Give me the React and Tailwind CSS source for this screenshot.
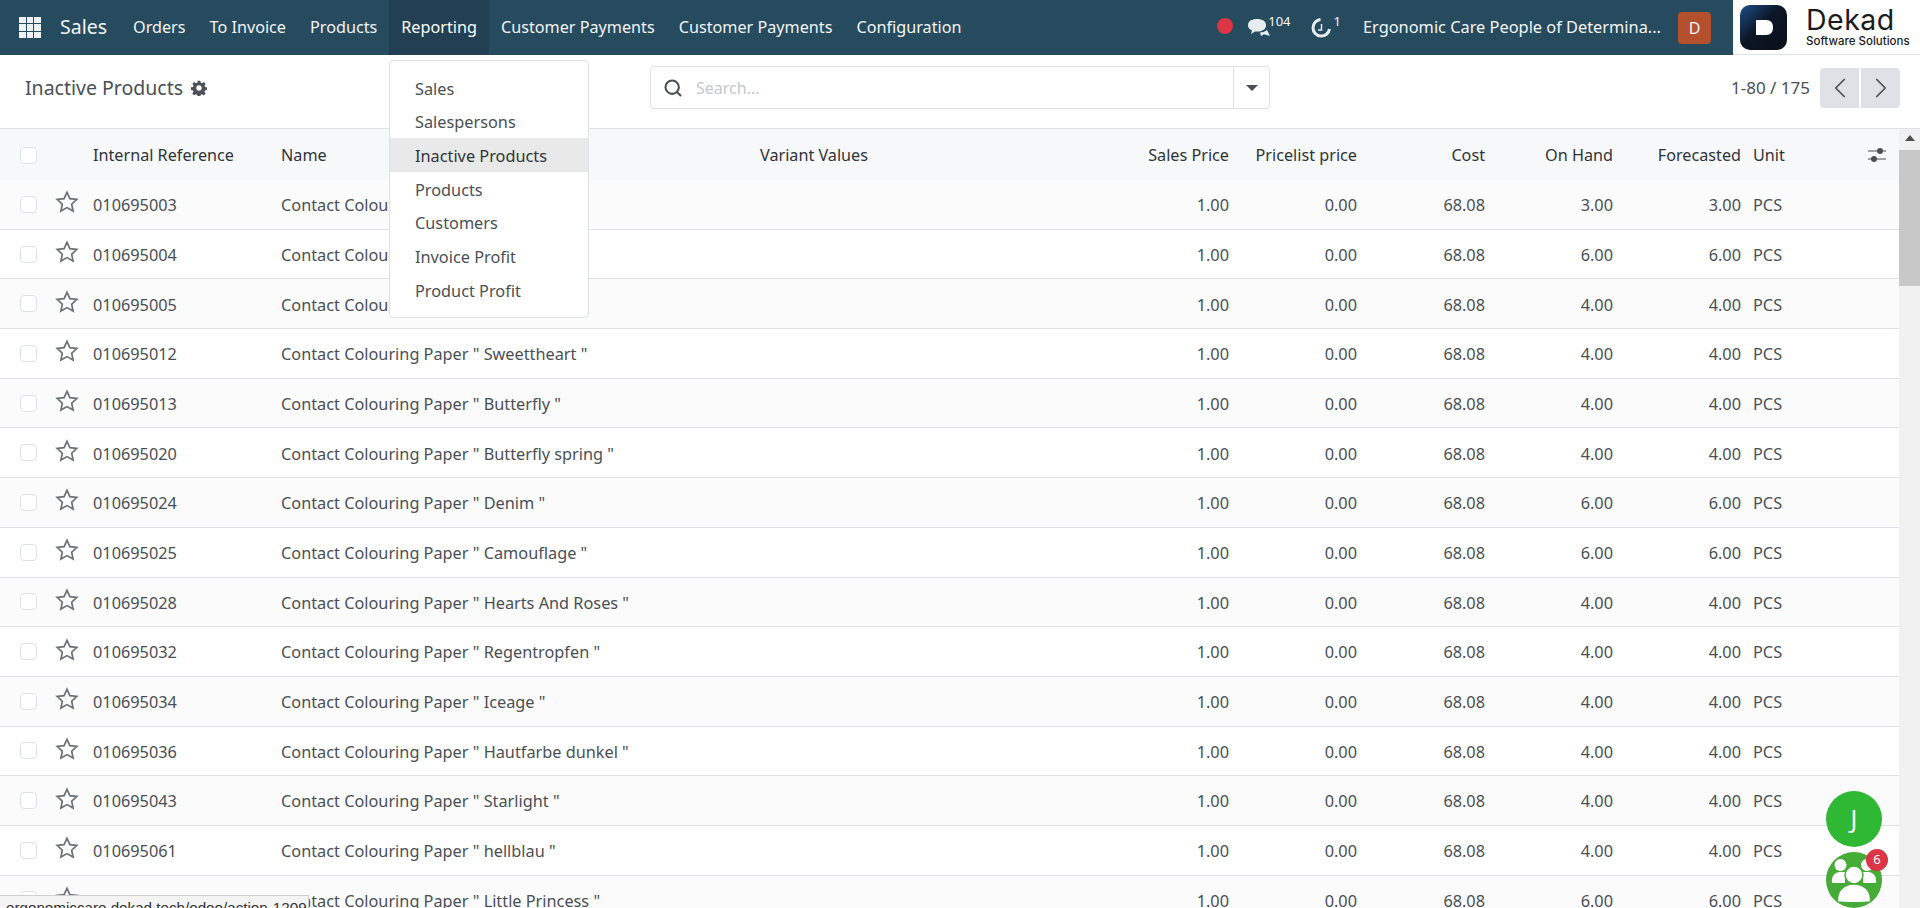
import { ChevronLeft, ChevronRight, Search } from 'lucide-react'

const navItems = ['Orders', 'To Invoice', 'Products', 'Reporting', 'Customer Payments', 'Customer Payments', 'Configuration']
const menuItems = ['Sales', 'Salespersons', 'Inactive Products', 'Products', 'Customers', 'Invoice Profit', 'Product Profit']

const rows = [
  ['010695003', 'Contact Colouring Paper', '3.00', '3.00'],
  ['010695004', 'Contact Colouring Paper', '6.00', '6.00'],
  ['010695005', 'Contact Colouring Paper', '4.00', '4.00'],
  ['010695012', 'Contact Colouring Paper " Sweettheart "', '4.00', '4.00'],
  ['010695013', 'Contact Colouring Paper " Butterfly "', '4.00', '4.00'],
  ['010695020', 'Contact Colouring Paper " Butterfly spring "', '4.00', '4.00'],
  ['010695024', 'Contact Colouring Paper " Denim "', '6.00', '6.00'],
  ['010695025', 'Contact Colouring Paper " Camouflage "', '6.00', '6.00'],
  ['010695028', 'Contact Colouring Paper " Hearts And Roses "', '4.00', '4.00'],
  ['010695032', 'Contact Colouring Paper " Regentropfen "', '4.00', '4.00'],
  ['010695034', 'Contact Colouring Paper " Iceage "', '4.00', '4.00'],
  ['010695036', 'Contact Colouring Paper " Hautfarbe dunkel "', '4.00', '4.00'],
  ['010695043', 'Contact Colouring Paper " Starlight "', '4.00', '4.00'],
  ['010695061', 'Contact Colouring Paper " hellblau "', '4.00', '4.00'],
  ['010695062', 'Contact Colouring Paper " Little Princess "', '6.00', '6.00'],
]

function Star() {
  return (
    <svg className="block" width="24" height="23" viewBox="0 0 24 23" fill="none" stroke="#6b7178" strokeWidth="1.7">
      <path d="M12 2.400l2.900 6.300 6.900.8-5.100 4.700 1.400 6.800-6.100-3.400-6.100 3.400 1.400-6.800-5.100-4.700 6.900-.8z" />
    </svg>
  )
}

function Checkbox() {
  return <span className="block w-[17px] h-[17px] rounded-[4px] border border-[#dee2e6] bg-white" />
}

function Row({ row }) {
  return (
    <div className="flex items-center h-[49.7px] pt-[2px] border-b border-[#dee2e6] even:bg-[#fbfbfc] text-[16.300px] text-[#4a4f55]">
      <div className="w-[93px] shrink-0 flex items-center pl-[20px] pb-[2px]">
        <Checkbox />
        <span className="ml-[18px] mb-[5px]"><Star /></span>
      </div>
      <div className="w-[188px] shrink-0">{row[0]}</div>
      <div className="w-[820px] shrink-0 whitespace-nowrap">{row[1]}</div>
      <div className="w-[128px] shrink-0 text-right">1.00</div>
      <div className="w-[128px] shrink-0 text-right">0.00</div>
      <div className="w-[128px] shrink-0 text-right">68.08</div>
      <div className="w-[128px] shrink-0 text-right">{row[2]}</div>
      <div className="w-[128px] shrink-0 text-right">{row[3]}</div>
      <div className="ml-[12px]">PCS</div>
    </div>
  )
}

export default function App() {
  return (
    <div className="relative h-[908px] w-[1920px] overflow-hidden bg-white text-[16px] font-['Noto_Sans',sans-serif]">
      <nav className="flex items-stretch h-[55px] bg-[#264a5e] text-[#f3f5f6]">
        <div className="flex items-center pl-[19px] pr-[19px]">
          <div className="grid grid-cols-3 gap-[1px] w-[22px] h-[21px]">
            {[0, 1, 2, 3, 4, 5, 6, 7, 8].map((i) => <span key={i} className="bg-[#eef1f3]" />)}
          </div>
        </div>
        <div className="flex items-center text-[19.500px] pr-[14px] pb-[1px]">Sales</div>
        {navItems.map((item, i) => (
          <div key={i} className={`flex items-center px-[12px] pb-[1px] text-[16.200px] ${item === 'Reporting' ? 'bg-[#223f53] text-white' : ''}`}>{item}</div>
        ))}
        <div className="flex-1 flex items-center justify-end">
          <span className="w-[16px] h-[16px] rounded-full bg-[#dc3545] mr-[14px] mb-[3px]" />
          <svg className="-mr-[3px] mb-[1px]" width="24" height="19" viewBox="0 0 24 19" fill="#e6ecef">
            <path d="M10 1c5.500 0 9 2.200 9 6.200s-3.500 6.300-9 6.300H8L4 16l1-3.500C2.500 11.500 1 9.500 1 7.200 1 3.200 4.500 1 10 1z" />
            <path d="M13 14.500c2.500 0 5-.8 7-2.500l3 6-6-1.800-3 1.800z" />
          </svg>
          <span className="text-[13px] leading-none self-start mt-[15px] mr-[20px]">104</span>
          <svg width="21" height="21" viewBox="0 0 21 21" fill="none" stroke="#e6ecef" strokeWidth="3">
            <path d="M9.500 2.500a8.300 8.300 0 1 0 9 9.500" />
            <path d="M10.500 7v6H7" strokeWidth="1.500" />
          </svg>
          <span className="text-[13px] leading-none self-start mt-[15px] ml-[2px] mr-[22px]">1</span>
          <span className="mr-[17px] pb-[1px] text-[16.350px] whitespace-nowrap">Ergonomic Care People of Determina...</span>
          <span className="w-[33px] h-[32px] rounded-[4px] bg-[#b5502f] flex items-center justify-center mr-[22px]">D</span>
          <div className="w-[187px] h-[55px] bg-white border-b border-[#dee2e6] flex items-center pl-[7px] text-[#1c1c1c]">
            <svg width="47" height="45" viewBox="0 0 47 45">
              <defs>
                <linearGradient id="logoFill" x1="0" y1="0" x2="1" y2="1">
                  <stop offset="0" stopColor="#1d4f8c" />
                  <stop offset="0.45" stopColor="#0c1626" />
                  <stop offset="1" stopColor="#0b0f18" />
                </linearGradient>
              </defs>
              <rect width="47" height="45" rx="10" fill="url(#logoFill)" />
              <path d="M16 15h10c5 0 7 3 7 7.500S31 30 26 30H16z" fill="#fff" />
            </svg>
            <div className="ml-[19px] leading-none whitespace-nowrap">
              <div className="text-[28.500px] leading-[29px] tracking-[0.5px] font-['Inter',sans-serif]">Dekad</div>
              <div className="text-[11.500px] leading-[15px] font-medium font-['Inter',sans-serif]">Software Solutions</div>
            </div>
          </div>
        </div>
      </nav>

      <div className="flex items-center h-[74px] pb-[8px] border-b border-[#dee2e6]">
        <div className="w-[650px] shrink-0 pl-[25px] flex items-center text-[19.500px] text-[#4a4f55]">
          Inactive Products
          <svg className="ml-[8px]" width="16" height="16" viewBox="0 0 24 24" fill="#495057">
            <path fillRule="evenodd" d="M10 1h4l.6 3.100 2 .8 2.600-1.800 2.800 2.800-1.800 2.600.8 2 3 .6v4l-3.100.6-.8 2 1.800 2.600-2.800 2.800-2.600-1.800-2 .8-.6 3h-4l-.6-3.100-2-.8-2.600 1.800-2.800-2.800 1.800-2.600-.8-2-3-.6v-4l3.100-.6.8-2-1.800-2.600 2.800-2.800 2.600 1.800 2-.8zM12 8a4 4 0 1 0 0 8 4 4 0 0 0 0-8z" />
          </svg>
        </div>
        <div className="flex items-center w-[620px] h-[43px] border border-[#dee2e6] rounded-[4px]">
          <Search size={20} strokeWidth={2.500} className="ml-[12px] text-[#4a4f55]" />
          <span className="ml-[13px] flex-1 text-[#c3c8ce]">Search...</span>
          <div className="w-[36px] h-full border-l border-[#dee2e6] flex items-center justify-center">
            <span className="w-0 h-0 border-x-[6px] border-x-transparent border-t-[6px] border-t-[#4a4f55]" />
          </div>
        </div>
        <div className="ml-auto flex items-center pr-[20px] text-[#4a4f55]">
          <span className="mr-[10px] text-[17px]">1-80 / 175</span>
          <span className="w-[39px] h-[40px] bg-[#dee2e6] rounded-l-[4px] flex items-center justify-center mr-[2px]"><ChevronLeft size={34} strokeWidth={1.200} /></span>
          <span className="w-[39px] h-[40px] bg-[#dee2e6] rounded-r-[4px] flex items-center justify-center"><ChevronRight size={34} strokeWidth={1.200} /></span>
        </div>
      </div>

      <div className="flex">
        <div className="w-[1899px]">
          <div className="flex items-center h-[51px] pt-[1px] bg-[#f7f8f9] text-[16.200px] text-[#2f3439]">
            <div className="w-[93px] shrink-0 pl-[20px]"><Checkbox /></div>
            <div className="w-[188px] shrink-0">Internal Reference</div>
            <div className="w-[479px] shrink-0">Name</div>
            <div className="w-[341px] shrink-0">Variant Values</div>
            <div className="w-[128px] shrink-0 text-right">Sales Price</div>
            <div className="w-[128px] shrink-0 text-right">Pricelist price</div>
            <div className="w-[128px] shrink-0 text-right">Cost</div>
            <div className="w-[128px] shrink-0 text-right">On Hand</div>
            <div className="w-[128px] shrink-0 text-right">Forecasted</div>
            <div className="ml-[12px]">Unit</div>
            <svg className="ml-[82px]" width="20" height="20" viewBox="0 0 20 20" fill="#4a4f55" stroke="#4a4f55">
              <path d="M1 6h18M1 14h18" strokeWidth="1.200" />
              <circle cx="13" cy="6" r="3" stroke="none" />
              <circle cx="7" cy="14" r="3" stroke="none" />
            </svg>
          </div>
          {rows.map((row) => <Row key={row[0]} row={row} />)}
        </div>
        <div className="w-[21px] h-[779px] bg-[#f1f1f1] flex flex-col items-center">
          <span className="mt-[6px] w-0 h-0 border-x-[5px] border-x-transparent border-b-[6px] border-b-[#505050]" />
          <div className="mt-[9px] w-full h-[136px] bg-[#c8c8c8]" />
        </div>
      </div>

      {/* dropdown, status bar and chat bubbles sit over the page */}
      <div className="absolute left-[389px] top-[60px] w-[200px] h-[258px] pt-[10px] bg-white border border-[#dee2e6] rounded-[4px] text-[16.300px] text-[#4a4f55]">
        {menuItems.map((item) => (
          <div key={item} className={`h-[33.700px] pt-[2px] flex items-center pl-[25px] ${item === 'Inactive Products' ? 'bg-[#e9e9e9] text-[#2f3439]' : ''}`}>{item}</div>
        ))}
      </div>

      <div className="absolute left-0 bottom-0 w-[309px] h-[13px] bg-[#f4f4f4] border-t border-r border-[#d0d0d0] overflow-hidden whitespace-nowrap pl-[6px] pt-[3px] text-[15.200px] leading-[17px] text-[#333] font-['Liberation_Sans',sans-serif]">
        ergonomiccare.dekad.tech/odoo/action-1209
      </div>

      <div className="absolute left-[1826px] top-[791px] w-[56px] h-[56px] rounded-full bg-[#2eb834] flex items-center justify-center text-white text-[25px]">J</div>
      <div className="absolute left-[1826px] top-[852px] w-[56px] h-[56px] rounded-full bg-[#46ac38] overflow-hidden">
        <svg className="block" width="56" height="56" viewBox="0 0 56 56" fill="white">
          <circle cx="14.500" cy="13" r="6" />
          <circle cx="41" cy="13" r="6" />
          <path d="M6 31c-1-7 3-11 8-11h5v11z" />
          <path d="M50 31c1-7-3-11-8-11h-5v11z" />
          <circle cx="28" cy="23" r="9" stroke="#46ac38" strokeWidth="1.500" />
          <path d="M11.500 50c-1-12 7-18 16.500-18s17.500 6 16.500 18c-8 1-25 1-33 0z" stroke="#46ac38" strokeWidth="1.500" />
        </svg>
      </div>
      <div className="absolute left-[1866px] top-[849px] w-[22px] h-[22px] rounded-full bg-[#dc3545] flex items-center justify-center text-white text-[13px]">6</div>
    </div>
  )
}
